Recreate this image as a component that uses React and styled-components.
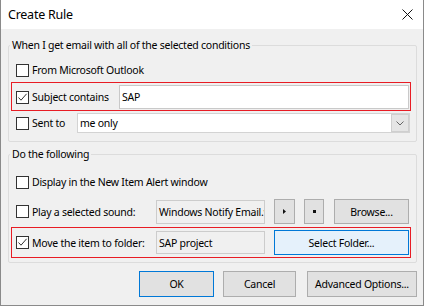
import React from "react";
import styled, { createGlobalStyle } from "styled-components";

const Global = createGlobalStyle`
  html, body { margin: 0; padding: 0; background: #fff; }
  body {
    font-family: "Noto Sans", "Open Sans", sans-serif;
    font-size: 10.5px;
    letter-spacing: -0.25px;
    color: #000;
  }
  * { box-sizing: border-box; }
`;

const Window = styled.div`
  width: 424px;
  height: 306px;
  border: 1px solid #8a8a8a;
  border-top: none;
  background: #f0f0f0;
  display: flex;
  flex-direction: column;
`;

const TitleBar = styled.div`
  height: 29px;
  flex: none;
  background: #fff;
  display: flex;
  align-items: center;
  justify-content: space-between;
  padding: 0 10px 0 7px;
`;

const Title = styled.span`
  font-size: 12.5px;
  line-height: 16px;
`;

const Body = styled.div`
  flex: 1;
  display: flex;
  flex-direction: column;
  padding: 8px 6px 0 7px;
`;

const Group = styled.fieldset`
  margin: ${(p) => p.$mt || 0}px 0 0 0;
  padding: ${(p) => p.$pt}px 0 ${(p) => p.$pb}px 0;
  border: 1px solid #dcdcdc;
  border-radius: 2px;
  min-width: 0;
  display: flex;
  flex-direction: column;
`;

const Legend = styled.legend`
  padding: 0 2px;
  margin-left: 1px;
  line-height: 16px;
`;

const Row = styled.div`
  display: flex;
  align-items: center;
  height: ${(p) => p.$h}px;
  margin-top: ${(p) => p.$mt || 0}px;
  padding: 0 6px 0 7px;
`;

const Highlight = styled.div`
  display: flex;
  align-items: center;
  margin: ${(p) => p.$mt || 0}px 5px 0 2px;
  border: 1px solid #e81c24;
  padding: 2px 1px ${(p) => p.$pb}px 4px;
`;

const LabelCell = styled.div`
  display: flex;
  align-items: center;
  gap: 3px;
  width: ${(p) => p.$w}px;
  flex: none;
  white-space: nowrap;
`;

const Box = styled.span`
  width: 13px;
  height: 13px;
  flex: none;
  border: 1px solid #333;
  background: #fff;
  display: flex;
`;

const TextBox = styled.div`
  flex: 1;
  height: ${(p) => p.$h}px;
  background: #fff;
  border: 1px solid #c9c9c9;
  padding: 0 2px;
  display: flex;
  align-items: center;
`;

const Combo = styled.div`
  flex: 1;
  height: 20px;
  background: #fff;
  border: 1px solid #d3d3d3;
  padding-left: 2px;
  display: flex;
  align-items: center;
`;

const ComboText = styled.span`
  flex: 1;
`;

const DropButton = styled.span`
  width: 18px;
  height: 18px;
  background: #e5e5e5;
  border: 1px solid #cfcfcf;
  display: flex;
  align-items: center;
  justify-content: center;
`;

const ReadOnly = styled.div`
  width: ${(p) => p.$w}px;
  height: ${(p) => p.$h}px;
  flex: none;
  background: #f0f0f0;
  border: 1px solid #cccccc;
  padding: 0 2px;
  overflow: hidden;
  white-space: nowrap;
  display: flex;
  align-items: center;
`;

const Button = styled.div`
  width: ${(p) => p.$w}px;
  height: ${(p) => p.$h}px;
  flex: none;
  margin-left: ${(p) => p.$ml || 0}px;
  background: ${(p) => (p.$hover ? "#e5f1fb" : "#e1e1e1")};
  border: 1px solid ${(p) => (p.$hover || p.$default ? "#0078d7" : "#adadad")};
  display: flex;
  align-items: center;
  justify-content: center;
  white-space: nowrap;
`;

const ButtonRow = styled.div`
  display: flex;
  justify-content: flex-end;
  margin-top: 8px;
`;

const Check = ({ checked }) => (
  <Box>
    {checked && (
      <svg width="11" height="11" viewBox="0 0 11 11">
        <polyline points="1.5,5.5 4,8.2 9.6,1.8" fill="none" stroke="#333" strokeWidth="1" />
      </svg>
    )}
  </Box>
);

const CheckLabel = ({ checked, w, children }) => (
  <LabelCell $w={w}>
    <Check checked={checked} />
    <span>{children}</span>
  </LabelCell>
);

export default function App() {
  return (
    <>
      <Global />
      <Window>
        <TitleBar>
          <Title>Create Rule</Title>
          <svg width="11" height="11" viewBox="0 0 11 11">
            <path d="M0.5 0.5 L10.5 10.5 M10.5 0.5 L0.5 10.5" stroke="#111" strokeWidth="1" />
          </svg>
        </TitleBar>
        <Body>
          <Group $pt={6} $pb={6}>
            <Legend>When I get email with all of the selected conditions</Legend>
            <Row $h={22}>
              <CheckLabel w={200}>From Microsoft Outlook</CheckLabel>
            </Row>
            <Highlight $mt={1} $pb={1}>
              <CheckLabel checked w={103}>Subject contains</CheckLabel>
              <TextBox $h={24}>SAP</TextBox>
            </Highlight>
            <Row $h={24}>
              <CheckLabel w={61}>Sent to</CheckLabel>
              <Combo>
                <ComboText>me only</ComboText>
                <DropButton>
                  <svg width="8" height="5" viewBox="0 0 8 5">
                    <polyline points="0.5,0.5 4,4 7.5,0.5" fill="none" stroke="#666" strokeWidth="1" />
                  </svg>
                </DropButton>
              </Combo>
            </Row>
          </Group>
          <Group $mt={4} $pt={8} $pb={4}>
            <Legend>Do the following</Legend>
            <Row $h={24}>
              <CheckLabel w={300}>Display in the New Item Alert window</CheckLabel>
            </Row>
            <Row $h={25} $mt={5}>
              <CheckLabel w={140}>Play a selected sound:</CheckLabel>
              <ReadOnly $w={109} $h={24}>Windows Notify Email.wav</ReadOnly>
              <Button $w={21} $h={25} $ml={9}>
                <svg width="3" height="5" viewBox="0 0 3 5">
                  <polygon points="0,0 3,2.5 0,5" fill="#111" />
                </svg>
              </Button>
              <Button $w={20} $h={25} $ml={9}>
                <svg width="3" height="3" viewBox="0 0 3 3">
                  <rect width="3" height="3" fill="#111" />
                </svg>
              </Button>
              <Button $w={75} $h={25} $ml={10}>Browse...</Button>
            </Row>
            <Highlight $mt={3} $pb={2}>
              <CheckLabel checked w={140}>Move the item to folder:</CheckLabel>
              <ReadOnly $w={109} $h={23}>SAP project</ReadOnly>
              <Button $w={135} $h={25} $ml={9} $hover>Select Folder...</Button>
            </Highlight>
          </Group>
          <ButtonRow>
            <Button $w={75} $h={26} $default>OK</Button>
            <Button $w={73} $h={26} $ml={9}>Cancel</Button>
            <Button $w={110} $h={26} $ml={11}>Advanced Options...</Button>
          </ButtonRow>
        </Body>
      </Window>
    </>
  );
}
